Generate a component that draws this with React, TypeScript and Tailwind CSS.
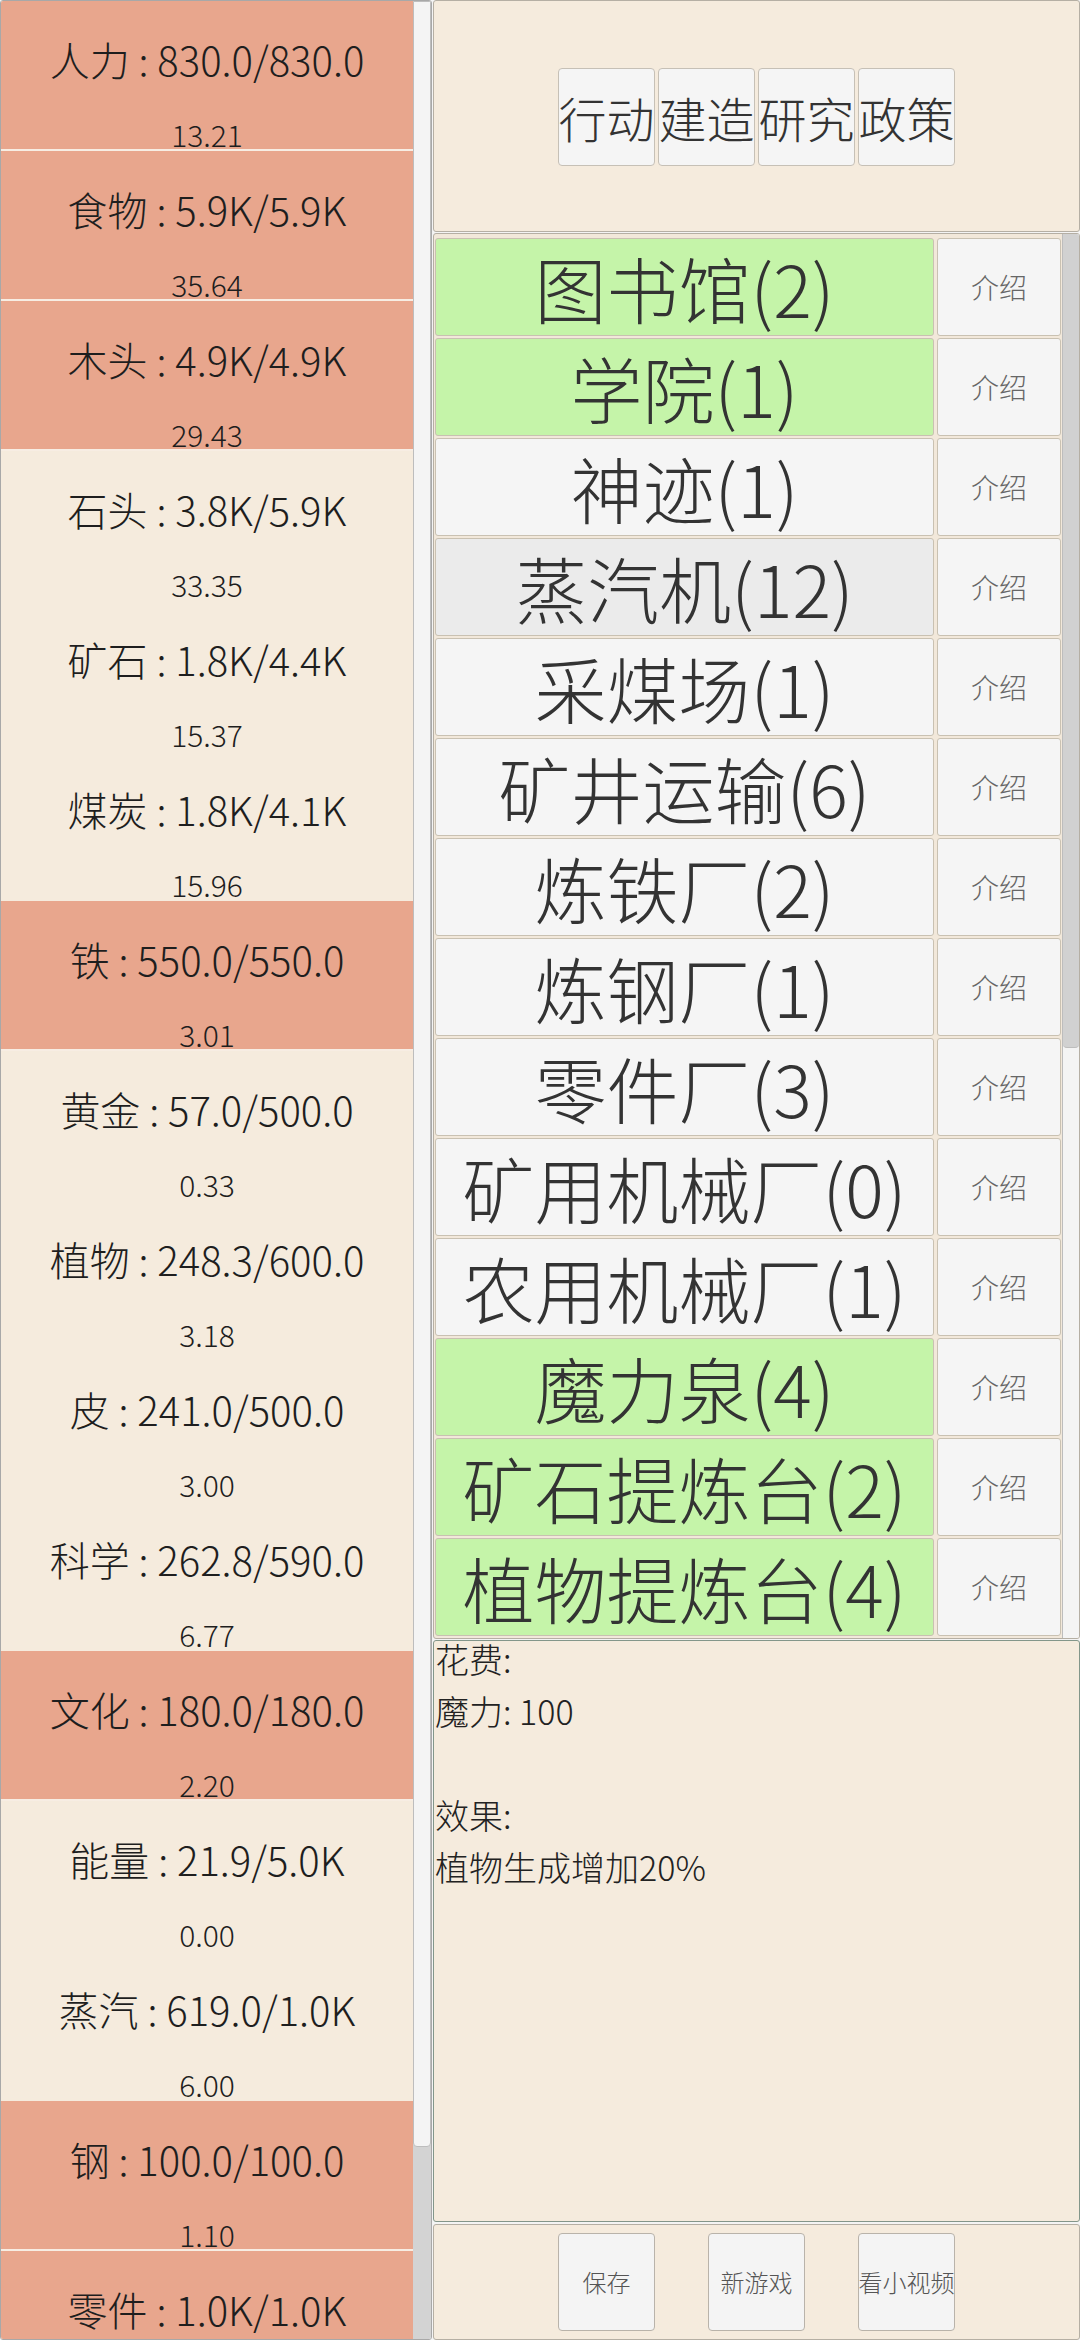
import React, { FC } from "react";

interface Resource {
    name: string
    amount: string
    rate?: string
    full: boolean
}

const resources: Resource[] = [
    { name: "人力", amount: "830.0/830.0", rate: "13.21", full: true },
    { name: "食物", amount: "5.9K/5.9K", rate: "35.64", full: true },
    { name: "木头", amount: "4.9K/4.9K", rate: "29.43", full: true },
    { name: "石头", amount: "3.8K/5.9K", rate: "33.35", full: false },
    { name: "矿石", amount: "1.8K/4.4K", rate: "15.37", full: false },
    { name: "煤炭", amount: "1.8K/4.1K", rate: "15.96", full: false },
    { name: "铁", amount: "550.0/550.0", rate: "3.01", full: true },
    { name: "黄金", amount: "57.0/500.0", rate: "0.33", full: false },
    { name: "植物", amount: "248.3/600.0", rate: "3.18", full: false },
    { name: "皮", amount: "241.0/500.0", rate: "3.00", full: false },
    { name: "科学", amount: "262.8/590.0", rate: "6.77", full: false },
    { name: "文化", amount: "180.0/180.0", rate: "2.20", full: true },
    { name: "能量", amount: "21.9/5.0K", rate: "0.00", full: false },
    { name: "蒸汽", amount: "619.0/1.0K", rate: "6.00", full: false },
    { name: "钢", amount: "100.0/100.0", rate: "1.10", full: true },
    { name: "零件", amount: "1.0K/1.0K", full: true },
];

interface Building {
    name: string
    kind: "ok" | "plain" | "pressed"
}

const buildings: Building[] = [
    { name: "图书馆(2)", kind: "ok" },
    { name: "学院(1)", kind: "ok" },
    { name: "神迹(1)", kind: "plain" },
    { name: "蒸汽机(12)", kind: "pressed" },
    { name: "采煤场(1)", kind: "plain" },
    { name: "矿井运输(6)", kind: "plain" },
    { name: "炼铁厂(2)", kind: "plain" },
    { name: "炼钢厂(1)", kind: "plain" },
    { name: "零件厂(3)", kind: "plain" },
    { name: "矿用机械厂(0)", kind: "plain" },
    { name: "农用机械厂(1)", kind: "plain" },
    { name: "魔力泉(4)", kind: "ok" },
    { name: "矿石提炼台(2)", kind: "ok" },
    { name: "植物提炼台(4)", kind: "ok" },
];

const ResourceRow: FC<{ res: Resource }> = ({ res }) => {
    return (
        <div className={`flex flex-col items-center h-[150px] shrink-0 border-b-2 ${res.full ? "bg-[#e8a68d] border-[#f7ede3]" : "bg-[#f5ebdd] border-[#f5ebdd]"}`}>
            <div className="pt-[34px] text-[40px] leading-[48px] text-[#1e1e1e] whitespace-nowrap">
                {res.name} : {res.amount}
            </div>
            {res.rate && (
                <div className="mt-auto text-[30px] leading-[30px] text-[#1e1e1e]">{res.rate}</div>
            )}
        </div>
    );
}

const BuildingRow: FC<{ b: Building }> = ({ b }) => {
    const bg = b.kind === "ok" ? "bg-[#c5f4a9]" : b.kind === "pressed" ? "bg-[#ebebeb]" : "bg-[#f5f5f5]";
    return (
        <div className="flex h-[100px] shrink-0 gap-[3px] py-[1px] pl-[1px]">
            <div className={`flex-1 flex items-center justify-center border border-[#c9c1b2] rounded-[3px] text-[72px] leading-none text-[#333] whitespace-nowrap ${bg}`}>
                {b.name}
            </div>
            <div className="w-[124px] flex items-center justify-center border border-[#c9c1b2] rounded-[3px] bg-[#f5f5f5] text-[28px] text-[#666]">
                介绍
            </div>
        </div>
    );
}

const TabButton: FC<{ label: string }> = ({ label }) => (
    <div className="w-[97px] h-[98px] flex items-center justify-center border border-[#c6c0b6] rounded-[4px] bg-[#f5f5f5] text-[48px] leading-none text-[#333] whitespace-nowrap">
        {label}
    </div>
);

const BottomButton: FC<{ label: string }> = ({ label }) => (
    <div className="w-[97px] h-[98px] flex items-center justify-center border border-[#b9b3aa] rounded-[4px] bg-[#f4f4f4] text-[24px] text-[#555] whitespace-nowrap">
        {label}
    </div>
);

const App: FC = () => {
    return (
        <div
            className="flex w-[1080px] h-[2340px] overflow-hidden bg-[#f4f4f4] font-light"
            style={{ fontFamily: '"Noto Sans CJK SC", "Noto Sans", sans-serif' }}
        >
            {/* resources */}
            <div className="flex w-[432px] h-full border border-[#a8a8a8] rounded-[3px] overflow-hidden">
                <div className="flex flex-col w-[412px] bg-[#f5ebdd] overflow-hidden">
                    {resources.map((r, i) => <ResourceRow key={i} res={r} />)}
                </div>
                <div className="flex flex-col w-[18px] bg-[#d3d3d3]">
                    <div className="h-[2146px] bg-[#f4f4f4] border border-[#bdbdbd] rounded-b-[4px]" />
                </div>
            </div>

            <div className="flex flex-col flex-1 pl-[1px]">
                {/* tabs */}
                <div className="h-[232px] flex items-center justify-center gap-[3px] bg-[#f5ebdd] border border-[#b5afa4] rounded-[3px] pt-[2px]">
                    {["行动", "建造", "研究", "政策"].map(t => <TabButton key={t} label={t} />)}
                </div>

                {/* buildings */}
                <div className="flex h-[1406px] bg-[#f2e8da] border border-[#b5afa4] rounded-[3px] mt-[1px] pt-[3px] overflow-hidden">
                    <div className="flex flex-col flex-1">
                        {buildings.map((b, i) => <BuildingRow key={i} b={b} />)}
                    </div>
                    <div className="flex flex-col w-[17px] ml-[1px] -mt-[3px] bg-[#f4f4f4] border-l border-[#bdbdbd]">
                        <div className="h-[814px] bg-[#d1d1d1] rounded-b-[4px] border-b border-[#bdbdbd]" />
                    </div>
                </div>

                {/* details */}
                <div className="h-[582px] bg-[#f5ebdd] border border-[#83968a] rounded-[3px] mt-[1px] px-[1px] overflow-hidden text-[34px] leading-[52px] text-[#222]">
                    <div className="-mt-[8px]">花费:</div>
                    <div>魔力: 100</div>
                    <div className="h-[52px]" />
                    <div>效果:</div>
                    <div>植物生成增加20%</div>
                </div>

                {/* bottom */}
                <div className="flex-1 flex items-center justify-center gap-[53px] bg-[#f5ebdd] border border-[#b5afa4] rounded-[3px] mt-[2px]">
                    {["保存", "新游戏", "看小视频"].map(t => <BottomButton key={t} label={t} />)}
                </div>
            </div>
        </div>
    );
}

export default App;
